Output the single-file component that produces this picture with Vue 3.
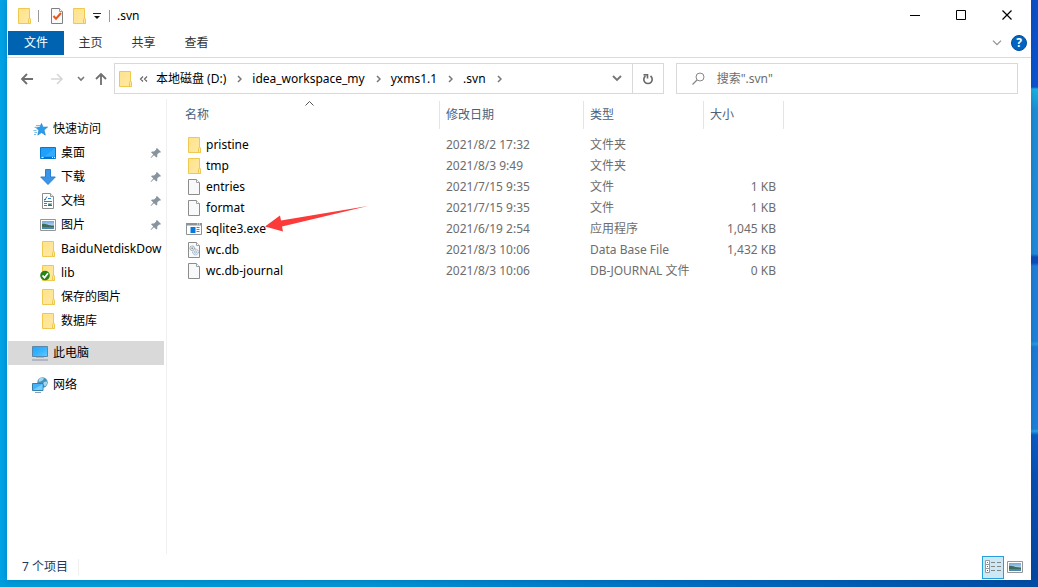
<script setup>
import { ref } from 'vue'

const tabs = ['主页', '共享', '查看']
const crumbs = ['本地磁盘 (D:)', 'idea_workspace_my', 'yxms1.1', '.svn']
const quick = [
  { name: '桌面', icon: 'desktop', pinned: true },
  { name: '下载', icon: 'download', pinned: true },
  { name: '文档', icon: 'document', pinned: true },
  { name: '图片', icon: 'picture', pinned: true },
  { name: 'BaiduNetdiskDow', icon: 'folder' },
  { name: 'lib', icon: 'folder-ok' },
  { name: '保存的图片', icon: 'folder' },
  { name: '数据库', icon: 'folder' }
]
const files = [
  { name: 'pristine', icon: 'folder', date: '2021/8/2 17:32', type: '文件夹', size: '' },
  { name: 'tmp', icon: 'folder', date: '2021/8/3 9:49', type: '文件夹', size: '' },
  { name: 'entries', icon: 'file', date: '2021/7/15 9:35', type: '文件', size: '1 KB' },
  { name: 'format', icon: 'file', date: '2021/7/15 9:35', type: '文件', size: '1 KB' },
  { name: 'sqlite3.exe', icon: 'exe', date: '2021/6/19 2:54', type: '应用程序', size: '1,045 KB', marked: true },
  { name: 'wc.db', icon: 'db', date: '2021/8/3 10:06', type: 'Data Base File', size: '1,432 KB' },
  { name: 'wc.db-journal', icon: 'file', date: '2021/8/3 10:06', type: 'DB-JOURNAL 文件', size: '0 KB' }
]
const query = ref('')
</script>

<template>
  <div class="desktop">
    <svg class="defs" aria-hidden="true">
      <defs>
        <linearGradient id="g-folder" x1="0" y1="0" x2="1" y2="1">
          <stop offset="0" stop-color="#ffe38a" /><stop offset="1" stop-color="#ffe9a6" />
        </linearGradient>
        <linearGradient id="g-screen" x1="0" y1="0" x2="1" y2="1">
          <stop offset="0" stop-color="#22a4ff" /><stop offset=".5" stop-color="#35b4ff" /><stop offset="1" stop-color="#64cbff" />
        </linearGradient>
        <linearGradient id="g-sky" x1="0" y1="0" x2="0" y2="1">
          <stop offset="0" stop-color="#6fa8e0" /><stop offset="1" stop-color="#eaf5fb" />
        </linearGradient>
        <symbol id="folder" viewBox="0 0 16 16">
          <path d="M2.5.5h11v10.5h1v4.5h-12z" fill="url(#g-folder)" stroke="#eec84f" />
          <path d="M12.5 15.5v-4l1-1.5 1 1.5v4z" fill="#ffe9a0" stroke="#eec84f" />
        </symbol>
        <symbol id="folder-ok" viewBox="0 0 16 16">
          <use href="#folder" />
          <circle cx="5" cy="10.5" r="4.8" fill="#278517" />
          <path d="M2.5 10.5l2 2.2 3.5-4.4" fill="none" stroke="#fff" stroke-width="1.8" />
        </symbol>
        <symbol id="file" viewBox="0 0 16 16">
          <path d="M2.5.5h8l3 3v12h-11z" fill="#f8f9fa" stroke="#8c8c8c" />
          <path d="M10.5.5v3h3" fill="#fff" stroke="#a0a0a0" />
        </symbol>
        <symbol id="db" viewBox="0 0 16 16">
          <use href="#file" />
          <circle cx="6.2" cy="6.2" r="2.4" fill="#dce2e6" stroke="#8b969d" stroke-dasharray="1 .6" />
          <circle cx="6.2" cy="6.2" r=".8" fill="#7c878e" />
          <circle cx="9.5" cy="10" r="2.9" fill="#e4edf3" stroke="#8aa3b5" stroke-dasharray="1 .6" />
          <circle cx="9.5" cy="10" r="1" fill="#fff" stroke="#8aa3b5" stroke-width=".7" />
        </symbol>
        <symbol id="exe" viewBox="0 0 16 16">
          <path d="M.5 2.5h15v11H.5z" fill="#fff" stroke="#8e9397" />
          <path d="M0 2h16v2.5H0z" fill="#8e9397" />
          <path d="M11 3h1m1 0h1" stroke="#fff" />
          <path d="M4.5 6h5v6h-5z" fill="#0879dc" />
          <path d="M10.5 6.5h3m-3 2h3m-3 2h3" stroke="#6e7f91" />
        </symbol>
        <symbol id="desktop" viewBox="0 0 16 16">
          <path d="M.5 2.5h15v11H.5z" fill="#20a0fb" stroke="#0b77cb" />
          <path d="M15 3v8H5z" fill="#42b4ff" opacity=".6" />
          <path d="M1 12h14v1.5H1z" fill="#0b70bf" />
          <path d="M1.5 12.5h2m8.500 0h1m1 0h1" stroke="#fff" />
        </symbol>
        <symbol id="download" viewBox="0 0 16 16">
          <path d="M5.5.5h5v7.5h4.8L8 15.5.7 8h4.8z" fill="#3a94e8" stroke="#2b7fce" />
        </symbol>
        <symbol id="document" viewBox="0 0 16 16">
          <path d="M2.500.5h8l3 3v12h-11z" fill="#fff" stroke="#8c8c8c" />
          <path d="M10.500.5v3h3" fill="#eee" stroke="#999" />
          <path d="M4 6.500h2m1-3-2.500 4M8 5.500h3M4 8.500h8M4 10.500h3M4 12.500h3" stroke="#2483d2" fill="none" />
          <path d="M8 10h4v3H8z" fill="#86c5e8" /><path d="M8 13v-1.500l2-.5 2 1v1z" fill="#426f54" />
        </symbol>
        <symbol id="picture" viewBox="0 0 16 16">
          <path d="M.5 2.500h15v11H.5z" fill="#fff" stroke="#969696" />
          <path d="M2 4h12v8H2z" fill="url(#g-sky)" />
          <path d="M2 7c3-1 5 1.500 12 1.500V10H2z" fill="#3e6e5a" />
          <path d="M2 10h12v2H2z" fill="#4b87ae" />
        </symbol>
        <symbol id="star" viewBox="0 0 16 16">
          <path d="M8.500 2.500l1.400 3.700 4.600-.1-3.500 3 1.300 5-3.800-2.600-3.700 2.600 1.100-4.800-3.200-3h4.200z" fill="#2b9cea" stroke="#1b82ce" stroke-width=".7" />
          <path d="M3 4.500h4M1.500 6.500h3M.5 9.500h3M1.500 11.500h2.500M1 13.500h2" stroke="#7dbde9" />
        </symbol>
        <symbol id="pc" viewBox="0 0 16 16">
          <path d="M.5 1.500h15v10H.5z" fill="url(#g-screen)" stroke="#5c87a8" />
          <path d="M4 12.500h8" stroke="#a9b9c7" /><path d="M0 15h16" stroke="#8498ad" />
        </symbol>
        <symbol id="network" viewBox="0 0 16 16">
          <circle cx="10.500" cy="5.500" r="5.200" fill="#4593bd" />
          <path d="M7 2c2-1.500 4-1.500 5-.5l-1.500 2-2 1-2 .2zM12 5l3-.5c.3 2-.5 4-2 5l-2-2.500z" fill="#a9d6e8" />
          <path d="M.5 6.500h10.500v7H.5z" fill="#42b2fb" stroke="#397da9" />
          <path d="M1 13l9.500-6v6z" fill="#75cfff" /><path d="M3 15.500h6" stroke="#8aa0b4" />
        </symbol>
        <symbol id="check" viewBox="0 0 16 16">
          <path d="M2.500.5h8l3 3v12h-11z" fill="#fafafa" stroke="#808080" />
          <path d="M10.500.5v3h3" fill="#fff" stroke="#999" />
          <path d="M4.500 8l2.500 2.700 5-5.700" fill="none" stroke="#e8561c" stroke-width="2" />
        </symbol>
        <symbol id="pin" viewBox="0 0 12 12">
          <path d="M7 1l4 4-1 .7-.8-.2-2 2 .1 2-1 1-2.300-2.300L1 11l-.4-.4 2.700-3L1 5.300l1-.9 2 .1 2.200-2L6 1.800z" fill="#8794a0" />
        </symbol>
      </defs>
    </svg>

    <main class="window">
      <header class="titlebar">
        <svg class="ico"><use href="#folder" /></svg>
        <span class="bar"></span>
        <button class="tool" aria-label="属性"><svg class="ico"><use href="#check" /></svg></button>
        <button class="tool" aria-label="新建文件夹"><svg class="ico"><use href="#folder" /></svg></button>
        <button class="more" aria-label="自定义快速访问工具栏">
          <svg width="8" height="8" viewBox="0 0 8 8"><path d="M0 1.500h8" stroke="#222" /><path d="M1 4h6L4 7z" fill="#111" /></svg>
        </button>
        <span class="bar"></span>
        <h1 class="title">.svn</h1>
        <div class="controls">
          <button aria-label="最小化"><svg width="11" height="11"><path d="M0 5.500h10" stroke="#000" /></svg></button>
          <button aria-label="最大化"><svg width="11" height="11"><path d="M.5.500h9v9h-9z" fill="none" stroke="#000" /></svg></button>
          <button aria-label="关闭"><svg width="11" height="11"><path d="M.5.500l9 9m0-9l-9 9" stroke="#000" stroke-width="1.200" /></svg></button>
        </div>
      </header>

      <nav class="ribbon">
        <button class="tab primary">文件</button>
        <button v-for="t in tabs" :key="t" class="tab">{{ t }}</button>
        <button class="expand" aria-label="展开功能区">
          <svg width="10" height="6"><path d="M1 .7l4 4 4-4" fill="none" stroke="#8f8f8f" stroke-width="1.200" /></svg>
        </button>
        <button class="help" aria-label="帮助">?</button>
      </nav>

      <div class="address-row">
        <button class="nav back" aria-label="后退"><svg width="14" height="14"><path d="M13 7H2m5-5L2 7l5 5" fill="none" stroke="#6f6f6f" stroke-width="1.800" /></svg></button>
        <button class="nav forward" aria-label="前进"><svg width="14" height="14"><path d="M1 7h11M7 2l5 5-5 5" fill="none" stroke="#d6d6d6" stroke-width="1.600" /></svg></button>
        <button class="nav recent" aria-label="最近位置"><svg width="8" height="6"><path d="M1 1l3 3 3-3" fill="none" stroke="#777" stroke-width="1.600" /></svg></button>
        <button class="nav up" aria-label="上移"><svg width="14" height="14"><path d="M7 13V2M2 7l5-5 5 5" fill="none" stroke="#6f6f6f" stroke-width="1.800" /></svg></button>
        <div class="address">
          <svg class="ico"><use href="#folder" /></svg>
          <svg class="dbl" width="9" height="6"><path d="M4 .5L1.500 3 4 5.500M8 .5L5.500 3 8 5.500" fill="none" stroke="#666" stroke-width="1.200" /></svg>
          <template v-for="c in crumbs" :key="c">
            <button class="crumb">{{ c }}</button>
            <svg class="sep" width="5" height="8"><path d="M1 1l3 3-3 3" fill="none" stroke="#777" stroke-width="1.500" /></svg>
          </template>
          <button class="drop" aria-label="历史地址"><svg width="10" height="7"><path d="M1 1l4 4 4-4" fill="none" stroke="#777" stroke-width="1.900" /></svg></button>
          <button class="refresh" aria-label="刷新">
            <svg width="12" height="12"><path d="M8.500 3a4.200 4.200 0 1 1-5 0M1.500 1.700h4V5.500" fill="none" stroke="#686868" stroke-width="1.600" /></svg>
          </button>
        </div>
        <label class="search">
          <svg width="13" height="13"><circle cx="8" cy="5" r="4" fill="none" stroke="#888" /><path d="M5 8l-4.500 4.500" stroke="#888" stroke-width="1.200" /></svg>
          <input v-model="query" type="text" aria-label="搜索" placeholder="搜索&quot;.svn&quot;" />
        </label>
      </div>

      <div class="body">
        <aside class="sidebar">
          <a href="#" class="node"><svg class="ico"><use href="#star" /></svg><span>快速访问</span></a>
          <a v-for="q in quick" :key="q.name" href="#" class="node child">
            <svg class="ico"><use :href="'#' + q.icon" /></svg><span class="label">{{ q.name }}</span>
            <svg v-if="q.pinned" class="pin"><use href="#pin" /></svg>
          </a>
          <a href="#" class="node root selected"><svg class="ico"><use href="#pc" /></svg><span>此电脑</span></a>
          <a href="#" class="node root"><svg class="ico"><use href="#network" /></svg><span>网络</span></a>
        </aside>

        <section class="content">
          <table>
            <colgroup><col class="c-name" /><col class="c-date" /><col class="c-type" /><col class="c-size" /></colgroup>
            <thead>
              <tr>
                <th>名称<svg class="sort" width="9" height="5"><path d="M.5 4.500l4-4 4 4" fill="none" stroke="#555" /></svg></th>
                <th>修改日期</th><th>类型</th><th>大小</th>
              </tr>
            </thead>
            <tbody>
              <tr v-for="f in files" :key="f.name">
                <td>
                  <div class="name">
                    <svg class="ico"><use :href="'#' + f.icon" /></svg><span>{{ f.name }}</span>
                    <svg v-if="f.marked" class="arrow" viewBox="0 0 104 28"><path d="M0 20.500L15 9.500l1 5L103 0 17 20.500l1 5z" fill="#fc3a3a" /></svg>
                  </div>
                </td>
                <td>{{ f.date }}</td><td>{{ f.type }}</td><td class="size">{{ f.size }}</td>
              </tr>
            </tbody>
          </table>
        </section>
      </div>

      <footer class="status">
        <span class="count">7 个项目</span>
        <button class="view active" aria-label="详细信息">
          <svg width="16" height="14">
            <path d="M.5.500h4v12h-4zM.5 4.500h4m-4 4h4" fill="#fff" stroke="#9a9a9a" />
            <path d="M6 2.500h4m2 0h4M6 6.500h4m2 0h4M6 10.500h4m2 0h4" stroke="#858585" />
            <path d="M2 2.500h1" stroke="#2a9d8f" /><path d="M2 6.500h1" stroke="#2876d0" /><path d="M2 10.500h1" stroke="#c22" />
          </svg>
        </button>
        <button class="view" aria-label="大图标"><svg class="ico"><use href="#picture" /></svg></button>
      </footer>
    </main>
  </div>
</template>

<style>
body { margin: 0; }
</style>

<style scoped>
* { box-sizing: border-box; }
.desktop {
  min-height: 100vh;
  display: flex;
  padding: 0 7px 7px 7px;
  font: 12px/20px "Noto Sans", "Noto Sans CJK SC", sans-serif;
  color: #000;
  background:
    linear-gradient(90deg, #009cdb, #0095d6 35%, #006fc3 65%, #004da6) bottom / 100% 7px no-repeat,
    linear-gradient(180deg, #0b50c8 0, #0a55d2 87px, #18b4e2 89px, #1b8fd8 110px, #1f8bdc 254px, #0a4dba 257px, #0a50c0 263px, #1f80d8 266px, #1c82dc 341px, #249fdd 344px, #1b7bd8 347px, #1c80dc 429px, #22a8e4 431px, #0a5cc8 435px, #0850b4 480px, #0648a2) right / 7px 100% no-repeat,
    #00a2e6;
}
.defs { position: absolute; width: 0; height: 0; }
svg { display: block; flex: none; }
.ico { width: 16px; height: 16px; }
button { font: inherit; color: inherit; background: none; border: 0; padding: 0; display: flex; align-items: center; justify-content: center; }
.window { flex: 1; min-width: 0; display: flex; flex-direction: column; background: #fff; box-shadow: 0 0 6px rgba(0, 30, 80, .25); }

.titlebar { height: 31px; display: flex; align-items: center; padding: 0 1px 0 9px; }
.bar { width: 1px; height: 12px; background: #999; margin: 0 10px 0 6px; }
.titlebar .tool { margin-right: 6px; }
.more { width: 8px; height: 16px; }
.titlebar .more + .bar { margin: 0 7px 0 8px; }
.title { margin: 0; font-size: 12px; font-weight: 400; }
.controls { margin-left: auto; display: flex; align-self: stretch; }
.controls button { width: 46px; }

.ribbon { display: flex; align-items: center; height: 27px; padding: 0 4px 2px 1px; border-bottom: 1px solid #dadbdc; }
.tab { height: 24px; width: 53px; color: #333; }
.primary { background: #0063b1; color: #fff; width: 56px; }
.expand { margin-left: auto; margin-right: 9px; }
.help { width: 16px; height: 16px; border-radius: 50%; background: #0064c0; border: 1px solid #004e9a; color: #fff; font-weight: 700; line-height: 14px; }

.address-row { display: flex; align-items: center; padding: 5px 13px 5px 13px; }
.forward { margin-left: 16px; }
.recent { margin-left: 13px; }
.up { margin-left: 9px; }
.nav { height: 20px; }
.address { flex: 545; min-width: 0; height: 31px; margin-left: 6px; display: flex; align-items: center; border: 1px solid #d9d9d9; padding-left: 2px; }
.dbl { margin: 0 8px 0 6px; }
.crumb { color: #000; white-space: nowrap; }
.sep { margin: 0 10px 0 11px; }
.drop { margin-left: auto; width: 30px; align-self: stretch; }
.refresh { width: 31px; align-self: stretch; border-left: 1px solid #d9d9d9; }
.search { flex: 325; min-width: 0; height: 31px; margin-left: 12px; display: flex; align-items: center; gap: 12px; border: 1px solid #d9d9d9; padding-left: 15px; }
.search input { flex: 1; min-width: 0; border: 0; outline: 0; padding: 0; font: inherit; color: #000; }
.search input::placeholder { color: #6d6d6d; opacity: 1; }

.body { flex: 1; display: flex; min-height: 0; }
.sidebar { width: 160px; flex: none; border-right: 1px solid #f0f0f0; padding: 18px 2px 0 1px; }
.node { display: flex; align-items: center; gap: 4px; height: 24px; padding-left: 25px; color: #000; text-decoration: none; white-space: nowrap; }
.child { padding-left: 32px; gap: 5px; }
.label { flex: 1; min-width: 0; }
.pin { width: 12px; height: 12px; margin-right: 2px; }
.root { margin-top: 8px; padding-left: 24px; gap: 5px; }
.selected { background: #d9d9d9; }

.content { flex: 1; min-width: 0; padding-top: 2px; }
table { table-layout: fixed; width: 617px; border-collapse: separate; border-spacing: 0; }
.c-name { width: 273px; }
.c-date { width: 144px; }
.c-type { width: 120px; }
.c-size { width: 80px; }
th { height: 28px; padding: 0 0 0 6px; text-align: left; font-weight: 400; color: #4c607a; border-right: 1px solid #e5e5e5; position: relative; }
th:first-child { padding-left: 18px; }
thead::after { content: ""; display: block; height: 5px; }
.sort { position: absolute; top: 0; right: 125px; }
td { height: 21px; padding: 0 0 0 6px; color: #6d6d6d; white-space: nowrap; }
td:first-child { padding-left: 19px; }
td.size { padding: 0 8px 0 0; text-align: right; }
.name { display: flex; align-items: center; gap: 4px; color: #000; position: relative; }
.arrow { position: absolute; width: 104px; height: 28px; left: 79px; top: -13px; }

.status { display: flex; align-items: center; height: 26px; padding: 0 5px 0 15px; color: #1e395b; }
.count { padding-right: 10px; border-right: 1px solid #f0f0f0; line-height: 16px; margin-right: auto; }
.view { width: 22px; height: 23px; }
.active { background: #cce8f6; border: 1px solid #26a0da; }
</style>
